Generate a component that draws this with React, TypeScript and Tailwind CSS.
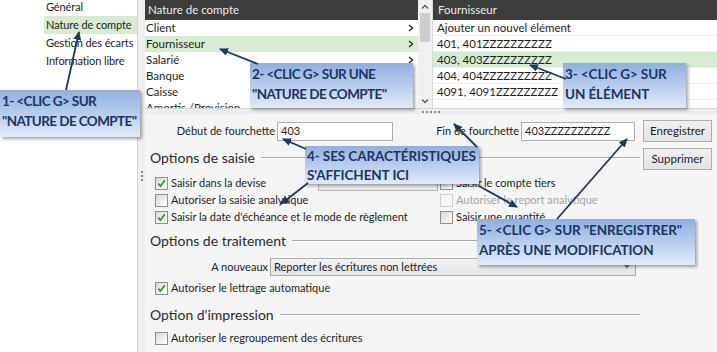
import React from 'react';

const navItems = ['Général', 'Nature de compte', 'Gestion des écarts', 'Information libre'];
const natures = ['Client', 'Fournisseur', 'Salarié', 'Banque', 'Caisse', 'Amortis./Provision'];
const elements = ['Ajouter un nouvel élément', '401, 401ZZZZZZZZZZ', '403, 403ZZZZZZZZZZ', '404, 404ZZZZZZZZZZ', '4091, 4091ZZZZZZZZZ'];

function Check({ checked = false, disabled = false }: { checked?: boolean; disabled?: boolean }) {
  return (
    <span
      className={`w-[13px] h-[13px] border flex items-center justify-center shrink-0 ${
        disabled ? 'border-[#d0d0d0] bg-[#f6f6f6]' : 'border-[#8e8f8f] bg-linear-to-br from-[#d8d8d8] to-white'
      }`}
    >
      {checked && (
        <svg width="9" height="9" viewBox="0 0 9 9">
          <path d="M1.3 4.6 L3.4 7.2 L7.8 1.2" fill="none" stroke="#2f8f2f" strokeWidth="1.7" />
        </svg>
      )}
    </span>
  );
}

function Option({ label, checked, disabled }: { label: string; checked?: boolean; disabled?: boolean }) {
  return (
    <div className="flex items-center gap-[3px] h-[17px] whitespace-nowrap">
      <Check checked={checked} disabled={disabled} />
      <span className={disabled ? 'text-[#a3a3a3]' : 'text-[#1e1e1e]'}>{label}</span>
    </div>
  );
}

function Heading({ children, className = '' }: { children: React.ReactNode; className?: string }) {
  return (
    <div className={`flex items-center h-[18px] pl-[5px] ${className}`}>
      <span className="text-[14px] leading-none text-[#2b2b2b] whitespace-nowrap">{children}</span>
      <span className="flex-1 ml-[6px] border-t border-t-[#a8a8a8] border-b border-b-white" />
    </div>
  );
}

function Callout({ lines, className, tight = false }: { lines: string[]; className: string; tight?: boolean }) {
  return (
    <div
      className={`absolute bg-linear-to-b from-[#8fafe2] to-[#e2eaf7] shadow-[2px_2px_3px_rgba(0,0,0,0.35)] pl-[2px] pt-[1px] font-['Lato',sans-serif] font-bold text-[13.5px] text-[#1c3562] ${
        tight ? 'tracking-[-0.6px]' : 'tracking-[-0.1px]'
      } ${className}`}
    >
      {lines.map((l) => (
        <div key={l} className="whitespace-nowrap">
          {l}
        </div>
      ))}
    </div>
  );
}

export default function App() {
  const arrows = [
    [66, 90, 79, 32],
    [258, 64, 220, 49],
    [566, 79, 530, 65],
    [306, 149, 283, 139],
    [308, 183, 281, 204],
    [477, 147, 454, 124],
    [479, 186, 517, 207],
    [557, 219, 627, 139],
  ];

  return (
    <div className="relative w-[717px] h-[352px] overflow-hidden flex bg-white font-['Lato',sans-serif] text-[11px] text-[#1e1e1e]">
      {/* left nav */}
      <nav className="w-[137px] shrink-0 bg-white flex flex-col -mt-[2px]">
        {navItems.map((item, i) => (
          <div
            key={item}
            className={`ml-[44px] pl-[2px] h-[18px] flex items-center whitespace-nowrap text-[11px] tracking-[-0.1px] ${i === 1 ? 'bg-[#d6ebd2]' : ''}`}
          >
            {item}
          </div>
        ))}
      </nav>

      {/* vertical splitter */}
      <div className="w-[8px] shrink-0 bg-[#efefef] border-l border-[#d2d2d2] flex flex-col items-center justify-center gap-[2px]">
        <span className="w-[2px] h-[2px] bg-[#8a8a8a]" />
        <span className="w-[2px] h-[2px] bg-[#8a8a8a]" />
        <span className="w-[2px] h-[2px] bg-[#8a8a8a]" />
      </div>

      <main className="flex-1 flex flex-col min-w-0">
        {/* lists */}
        <div className="flex h-[108px] overflow-hidden">
          <div className="w-[273px] shrink-0 flex flex-col">
            <div className="h-[20px] shrink-0 bg-[#3d3d3d] text-[#ececec] text-[11.5px] flex items-center pl-[3px]">Nature de compte</div>
            {natures.map((n, i) => (
              <div
                key={n}
                className={`h-[16px] shrink-0 flex items-center justify-between pl-[1px] pr-[4px] text-[11.5px] ${i === 1 ? 'bg-[#d6ebd2]' : 'bg-white'}`}
              >
                <span>{n}</span>
                <svg width="6" height="8" viewBox="0 0 6 8">
                  <path d="M1 1 L4.5 4 L1 7" fill="none" stroke="#333" strokeWidth="1.5" />
                </svg>
              </div>
            ))}
          </div>
          <div className="w-[14px] shrink-0 bg-[#f0f0f0] flex flex-col items-center">
            <div className="h-[13px] flex items-center">
              <svg width="8" height="6" viewBox="0 0 8 6">
                <path d="M1 4.5 L4 1.5 L7 4.5" fill="none" stroke="#555" strokeWidth="1.3" />
              </svg>
            </div>
            <div className="w-[10px] h-[29px] bg-[#cdcdcd]" />
            <div className="flex-1" />
            <div className="h-[14px] flex items-center">
              <svg width="8" height="6" viewBox="0 0 8 6">
                <path d="M1 1.5 L4 4.5 L7 1.5" fill="none" stroke="#555" strokeWidth="1.3" />
              </svg>
            </div>
          </div>
          <div className="flex-1 flex flex-col border-l border-[#dadada]">
            <div className="h-[20px] shrink-0 bg-[#3d3d3d] text-[#ececec] text-[11.5px] flex items-center pl-[5px]">Fournisseur</div>
            {elements.map((e, i) => (
              <div
                key={e}
                className={`h-[16px] shrink-0 flex items-center pl-[4px] text-[11.5px] border-b border-[#f0f0f0] ${i === 2 ? 'bg-[#d6ebd2]' : 'bg-white'}`}
              >
                {e}
              </div>
            ))}
          </div>
        </div>

        {/* horizontal splitter */}
        <div className="h-[6px] bg-[#ececec] border-t border-[#d6d6d6] flex items-center justify-center gap-[2px]">
          {[0, 1, 2, 3, 4].map((d) => (
            <span key={d} className="w-[2px] h-[2px] bg-[#8a8a8a]" />
          ))}
        </div>

        {/* form */}
        <div className="flex-1 bg-[#f5f5f5] flex pt-[6px]">
          <div className="w-[495px] shrink-0 flex flex-col">
            <div className="flex items-center h-[20px] mt-[1px] whitespace-nowrap">
              <span className="w-[132px] text-right pr-[2px]">Début de fourchette</span>
              <div className="w-[116px] h-[19px] bg-white border border-[#abadb3] flex items-center pl-[3px]">403</div>
              <span className="w-[128px] text-right pr-[2px]">Fin de fourchette</span>
              <div className="w-[114px] h-[19px] bg-white border border-[#abadb3] flex items-center pl-[3px]">403ZZZZZZZZZZ</div>
            </div>

            <Heading className="mt-[8px]">Options de saisie</Heading>
            <div className="grid grid-cols-[285px_1fr] pl-[10px] mt-[8px]">
              <div className="flex flex-col">
                <div className="flex items-center">
                  <Option label="Saisir dans la devise" checked />
                  <div className="ml-auto mr-[2px] w-[120px] h-[14px] border border-[#b5b5b5] bg-[#ececec]" />
                </div>
                <Option label="Autoriser la saisie analytique" />
                <Option label="Saisir la date d'échéance et le mode de règlement" checked />
              </div>
              <div className="flex flex-col">
                <Option label="Saisir le compte tiers" />
                <Option label="Autoriser le report analytique" disabled />
                <Option label="Saisir une quantité" />
              </div>
            </div>

            <Heading className="mt-[6px]">Options de traitement</Heading>
            <div className="flex items-center h-[18px] mt-[8px] whitespace-nowrap">
              <span className="w-[125px] text-right pr-[2px]">A nouveaux</span>
              <div className="w-[366px] h-[18px] border border-[#acacac] bg-linear-to-b from-[#f2f2f2] to-[#e4e4e4] flex items-center justify-between pl-[3px] pr-[5px]">
                <span>Reporter les écritures non lettrées</span>
                <svg width="6" height="4" viewBox="0 0 6 4">
                  <path d="M0 0 L6 0 L3 3.5 z" fill="#777" />
                </svg>
              </div>
            </div>
            <div className="pl-[10px] mt-[4px]">
              <Option label="Autoriser le lettrage automatique" checked />
            </div>

            <Heading className="mt-[9px]">Option d'impression</Heading>
            <div className="pl-[10px] mt-[6px]">
              <Option label="Autoriser le regroupement des écritures" />
            </div>
          </div>

          <div className="ml-[3px] w-[69px] flex flex-col gap-[6px]">
            <button className="h-[22px] border border-[#adadad] bg-linear-to-b from-[#f0f0f0] to-[#e3e3e3] text-[11.5px] text-[#1e1e1e]">
              Enregistrer
            </button>
            <button className="h-[22px] border border-[#adadad] bg-linear-to-b from-[#f0f0f0] to-[#e3e3e3] text-[11.5px] text-[#1e1e1e]">
              Supprimer
            </button>
          </div>
        </div>
      </main>

      {/* annotations */}
      <Callout tight className="left-0 top-[90px] w-[140px] h-[47px] leading-[20px]" lines={['1- <CLIC G> SUR', '"NATURE DE COMPTE"']} />
      <Callout tight className="left-[250px] top-[63px] w-[163px] h-[45px] leading-[20px]" lines={['2- <CLIC G> SUR UNE', '"NATURE DE COMPTE"']} />
      <Callout className="left-[563px] top-[63px] w-[123px] h-[45px] leading-[20px]" lines={['3- <CLIC G> SUR', 'UN ÉLÉMENT']} />
      <Callout className="left-[305px] top-[146px] w-[174px] h-[38px] leading-[19px]" lines={['4- SES CARACTÉRISTIQUES', "S'AFFICHENT ICI"]} />
      <Callout className="left-[477px] top-[219px] w-[218px] h-[46px] leading-[20px]" lines={['5- <CLIC G> SUR "ENREGISTRER"', 'APRÈS UNE MODIFICATION']} />

      <svg className="absolute inset-0 pointer-events-none" width="717" height="352">
        <defs>
          <marker id="ah" markerWidth="9" markerHeight="8" refX="8" refY="4" orient="auto" markerUnits="userSpaceOnUse">
            <path d="M0,0 L9,4 L0,8 z" fill="#1f3a5f" />
          </marker>
        </defs>
        {arrows.map(([x1, y1, x2, y2], i) => (
          <line key={i} x1={x1} y1={y1} x2={x2} y2={y2} stroke="#1f3a5f" strokeWidth="1.8" markerEnd="url(#ah)" />
        ))}
      </svg>
    </div>
  );
}
